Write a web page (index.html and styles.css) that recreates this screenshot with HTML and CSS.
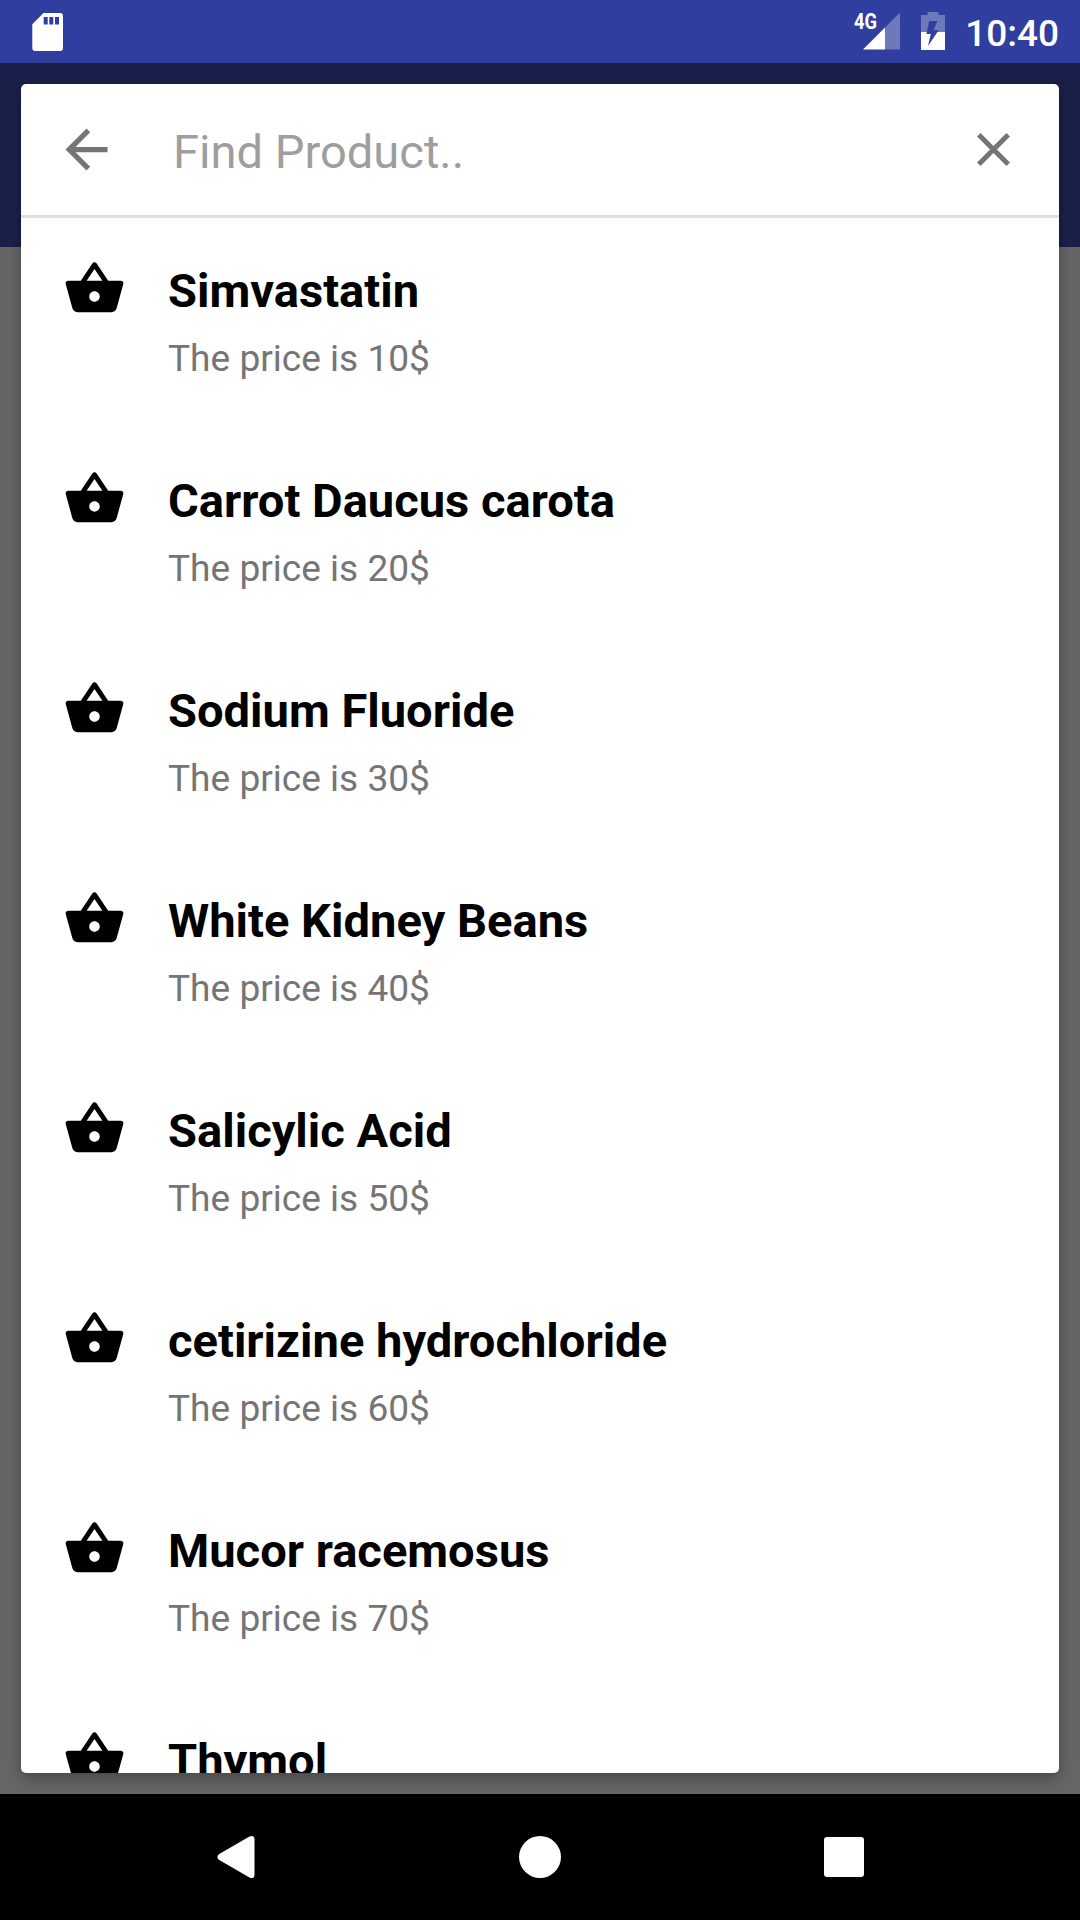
FILE: index.html
```html
<!DOCTYPE html>
<html lang="en">
<head>
<meta charset="utf-8">
<title>Find Product</title>
<link rel="stylesheet" href="styles.css">
</head>
<body>
<svg class="sprite" aria-hidden="true">
  <symbol id="basket" viewBox="0 0 24 24">
    <path d="M17.21 9l-4.38-6.56c-.19-.28-.51-.42-.83-.42-.32 0-.64.14-.83.43L6.79 9H2c-.55 0-1 .45-1 1 0 .09.01.18.04.27l2.54 9.27c.23.84 1 1.46 1.92 1.46h13c.92 0 1.69-.62 1.93-1.46l2.54-9.27L23 10c0-.55-.45-1-1-1h-4.790zM9 9l3-4.400L15 9H9zm3 8c-1.100 0-2-.9-2-2s.9-2 2-2 2 .9 2 2-.9 2-2 2z"/>
  </symbol>
</svg>
<div class="screen">
  <header class="status">
    <svg class="sd" width="31" height="38" viewBox="0 0 31 38">
      <path fill="#fff" fill-rule="evenodd" d="M11.500 0H28a3 3 0 0 1 3 3V35a3 3 0 0 1-3 3H3.300a3 3 0 0 1-3-3V11.300ZM11.700 4v7.500h4V4ZM17.300 4v7.500h4V4ZM23 4v7.500h4V4Z"/>
    </svg>
    <div class="status-right">
      <svg class="signal" width="46" height="38" viewBox="0 0 46 38">
        <path fill="#fff" fill-opacity=".3" d="M46 .500V37.500H31V15.500Z"/>
        <path fill="#fff" d="M9 37.500L31 15.500V37.500Z"/>
        <text class="net" x="0" y="17" textLength="23" lengthAdjust="spacingAndGlyphs">4G</text>
      </svg>
      <svg class="battery" width="24" height="38" viewBox="0 0 24 38">
        <path fill="#fff" fill-opacity=".3" d="M6.500 0h11v3H24V20H0V3h6.500Z"/>
        <path fill="#fff" d="M0 20H24V38H0Z"/>
        <path fill="#303f9f" d="M8.200 9H16.300L12.800 18H17.800L7 34L9.800 22H5.500Z"/>
      </svg>
      <span class="clock">10:40</span>
    </div>
  </header>
  <div class="toolbar"></div>
  <main class="backdrop">
    <section class="card">
      <div class="search">
        <svg class="back" width="63" height="63" viewBox="0 0 24 24"><path d="M20 11H7.830l5.590-5.590L12 4l-8 8 8 8 1.410-1.410L7.830 13H20v-2z"/></svg>
        <span class="hint">Find Product..</span>
        <svg class="close" width="33" height="33" viewBox="0 0 33 33"><path d="M1.800 1.800L31.200 31.200M31.200 1.800L1.800 31.200"/></svg>
      </div>
      <ul class="list">
        <li class="row"><svg class="icon"><use href="#basket"/></svg><div><div class="name">Simvastatin</div><div class="price">The price is 10$</div></div></li>
        <li class="row"><svg class="icon"><use href="#basket"/></svg><div><div class="name">Carrot Daucus carota</div><div class="price">The price is 20$</div></div></li>
        <li class="row"><svg class="icon"><use href="#basket"/></svg><div><div class="name">Sodium Fluoride</div><div class="price">The price is 30$</div></div></li>
        <li class="row"><svg class="icon"><use href="#basket"/></svg><div><div class="name">White Kidney Beans</div><div class="price">The price is 40$</div></div></li>
        <li class="row"><svg class="icon"><use href="#basket"/></svg><div><div class="name">Salicylic Acid</div><div class="price">The price is 50$</div></div></li>
        <li class="row"><svg class="icon"><use href="#basket"/></svg><div><div class="name">cetirizine hydrochloride</div><div class="price">The price is 60$</div></div></li>
        <li class="row"><svg class="icon"><use href="#basket"/></svg><div><div class="name">Mucor racemosus</div><div class="price">The price is 70$</div></div></li>
        <li class="row"><svg class="icon"><use href="#basket"/></svg><div><div class="name">Thymol</div></div></li>
      </ul>
    </section>
  </main>
  <nav class="navbar">
    <svg width="38" height="44" viewBox="0 0 38 44"><path fill="#fff" d="M1.800 19.200L32.500 1.500Q37.500 -.500 37.500 4.500V39.500Q37.500 44.500 32.500 42.500L1.800 24.800Q-1 22 1.800 19.200Z"/></svg>
    <svg width="42" height="42" viewBox="0 0 42 42"><circle cx="21" cy="21" r="21" fill="#fff"/></svg>
    <svg width="40" height="40" viewBox="0 0 40 40"><rect width="40" height="40" rx="3" fill="#fff"/></svg>
  </nav>
</div>
</body>
</html>
```
FILE: styles.css
```css
* { box-sizing: border-box; }
body { margin: 0; font-family: Roboto, "Noto Sans", sans-serif; }
svg { display: block; flex: none; }
.sprite { display: none; }

.screen {
  width: 1080px;
  height: 1920px;
  overflow: hidden;
  display: grid;
  grid-template-columns: 1080px;
  grid-template-rows: 63px 184px 1547px 126px;
  background: #666;
}

.status {
  grid-area: 1 / 1;
  background: #303f9f;
  display: flex;
  justify-content: space-between;
  padding: 0 21px 0 32px;
}
.sd { margin-top: 12.500px; }
.status-right { display: flex; }
.signal { margin: 12px 21px 0 0; overflow: visible; }
.net { font-size: 22px; font-weight: 700; fill: #fff; }
.battery { margin: 12px 20px 0 0; }
.clock {
  color: #fff;
  font-size: 37px;
  font-weight: 500;
  line-height: 43px;
  margin-top: 12px;
}

.toolbar { grid-area: 2 / 1; background: #1a204a; }

.backdrop {
  grid-area: 2 / 1 / 4 / 2;
  padding: 21px;
  overflow: hidden;
}
.card {
  height: 1689px;
  border-radius: 5px;
  overflow: hidden;
  background: #fff;
  box-shadow: 0 5px 16px rgba(0, 0, 0, .32);
}
.search {
  height: 134px;
  border-bottom: 3px solid #e0e0e0;
  display: flex;
  align-items: center;
  padding: 0 49px 0 34px;
}
.back { fill: #757575; }
.hint {
  flex: 1;
  margin: 5px 0 0 55px;
  font-size: 47.100px;
  line-height: 56px;
  color: #9e9e9e;
}
.close { stroke: #757575; stroke-width: 5; fill: none; }

.list { margin: 0; padding: 0; list-style: none; }
.row { height: 210px; display: flex; gap: 42px; padding: 45px 42px 0; }
.icon { width: 63px; height: 63px; margin-top: -6px; }
.name { font-size: 47.100px; font-weight: 700; line-height: 56px; color: #000; }
.price { margin-top: 18px; font-size: 37.100px; line-height: 43px; color: #757575; }

.navbar {
  grid-area: 4 / 1;
  background: #000;
  display: flex;
  justify-content: space-between;
  align-items: center;
  padding: 0 216px 0 217px;
}
```
